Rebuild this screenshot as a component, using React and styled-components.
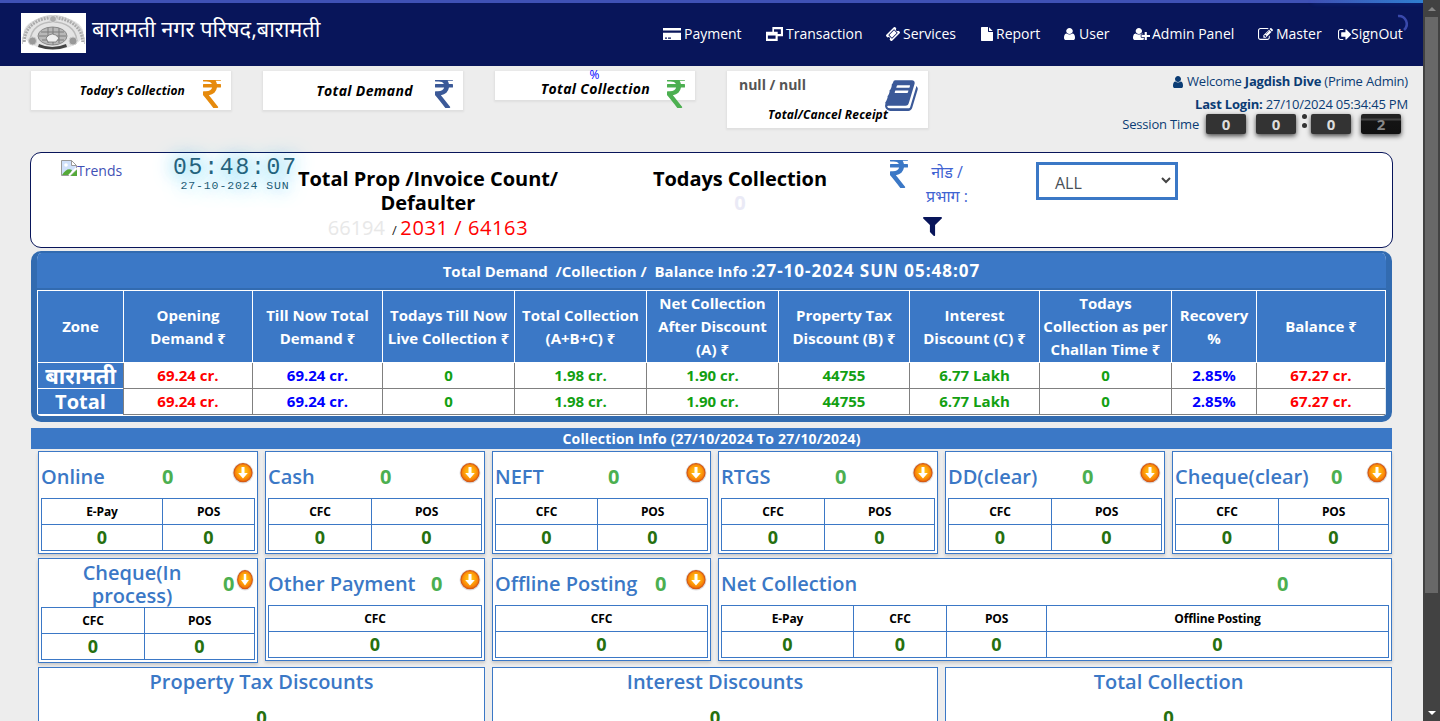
import React from "react";
import styled, { createGlobalStyle, css } from "styled-components";

const BLUE = "#3b78c6";
const NAVY = "#08155a";

const GlobalStyle = createGlobalStyle`
  * { box-sizing: border-box; }
  html, body { margin: 0; height: 721px; overflow: hidden; background: #ededed; }
  body { font-family: "Open Sans", "Noto Sans", "Noto Sans Devanagari", sans-serif; font-size: 14px; color: #000; }
`;

const Window = styled.div`
  display: flex;
  width: 1440px;
  height: 721px;
  overflow: hidden;
`;
const Page = styled.main`
  width: 1423px;
  height: 721px;
  overflow: hidden;
  background: #ededed;
`;

/* ---------- icons ---------- */
const PATHS = {
  rupee: "M1345 470v102q0 14-9 23t-23 9h-168q-23 144-129 234t-276 110q167 178 459 536 14 16 4 34-8 18-29 18h-195q-16 0-25-12-306-367-498-571-9-9-9-22v-127q0-13 9.5-22.5t22.5-9.5h112q132 0 212.5-43t102.5-125h-427q-14 0-23-9t-9-23v-102q0-14 9-23t23-9h413q-57-113-268-113h-145q-13 0-22.5-9.5t-9.5-22.5v-133q0-14 9-23t23-9h832q14 0 23 9t9 23v102q0 14-9 23t-23 9h-233q47 61 64 144h171q14 0 23 9t9 23z",
  user: "M1536 1399q0 109-62.5 187t-150.5 78h-854q-88 0-150.5-78t-62.5-187q0-85 8.5-160.5t31.5-152 58.5-131 94-89 134.5-34.5q131 128 313 128t313-128q76 0 134.5 34.5t94 89 58.5 131 31.5 152 8.5 160.5zm-256-887q0 159-112.5 271.5t-271.5 112.5-271.5-112.5-112.5-271.5 112.5-271.5 271.5-112.5 271.5 112.5 112.5 271.5z",
  filter: "M1595 295q17 41-14 70l-493 493v742q0 42-39 59-13 5-25 5-27 0-45-19l-256-256q-19-19-19-45v-486l-493-493q-31-29-14-70 17-39 59-39h1280q42 0 59 39z",
  book: "M1703 478q40 57 18 129l-275 906q-19 64-76.5 107.5t-122.5 43.5h-923q-77 0-148.5-53.5t-99.5-131.5q-24-67-2-127 0-4 3-27t4-37q1-8-3-21.5t-3-19.5q2-11 8-21t16.5-23.5 16.5-23.5q23-38 45-91.5t30-91.5q3-10 .5-30t-.5-28q3-11 17-28t17-23q21-36 42-92t25-90q1-9-2.5-32t.5-28q4-13 22-30.5t22-22.5q19-26 42.5-84.5t27.5-96.5q1-8-3-25.5t-2-26.5q2-8 9-18t18-23 17-21q8-12 16.5-30.5t15-35 16-36 19.5-32 26.5-23.5 36-11.5 47.5 5.5l-1 3q38-9 51-9h761q74 0 114 56t18 130l-274 906q-36 119-71.5 153.5t-128.5 34.5h-869q-27 0-38 15-11 16-1 43 24 70 144 70h923q29 0 56-15.5t35-41.5l300-987q7-22 5-57 38 15 59 43zm-1064 2q-4 13 2 22.5t20 9.5h608q13 0 25.5-9.5t16.5-22.5l21-64q4-13-2-22.5t-20-9.5h-608q-13 0-25.5 9.5t-16.5 22.5zm-83 256q-4 13 2 22.5t20 9.5h608q13 0 25.5-9.5t16.5-22.5l21-64q4-13-2-22.5t-20-9.5h-608q-13 0-25.5 9.5t-16.5 22.5z",
  userPlus: "M704 896q-159 0-271.5-112.5t-112.5-271.5 112.5-271.5 271.5-112.5 271.5 112.5 112.5 271.5-112.5 271.5-271.5 112.5zm960 128h352q13 0 22.5 9.5t9.5 22.5v192q0 13-9.5 22.5t-22.5 9.5h-352v352q0 13-9.5 22.5t-22.5 9.5h-192q-13 0-22.5-9.5t-9.5-22.5v-352h-352q-13 0-22.5-9.5t-9.5-22.5v-192q0-13 9.5-22.5t22.5-9.5h352v-352q0-13 9.5-22.5t22.5-9.5h192q13 0 22.5 9.5t9.5 22.5v352zm-736 224q0 52 38 90t90 38h256v238q-68 50-171 50h-874q-121 0-194-69t-73-190q0-53 3.5-103.5t14-109 26.5-108.5 43-97.5 62-81 85.5-53.5 111.5-20q19 0 39 17 79 61 154.5 91.5t164.5 30.5 164.5-30.5 154.5-91.5q20-17 39-17 132 0 217 96h-223q-52 0-90 38t-38 90v192z",
  edit: "M888 1184l116-116-152-152-116 116v56h96v96h56zm440-720q-16-16-33 1l-350 350q-17 17-1 33t33-1l350-350q17-17 1-33zm80 594v190q0 119-84.5 203.5t-203.5 84.5h-832q-119 0-203.5-84.5t-84.5-203.5v-832q0-119 84.5-203.5t203.5-84.5h832q63 0 117 25 15 7 18 23 3 17-9 29l-49 49q-14 14-32 8-23-6-45-6h-832q-66 0-113 47t-47 113v832q0 66 47 113t113 47h832q66 0 113-47t47-113v-126q0-13 9-22l64-64q15-15 35-7t20 29zm-96-738l288 288-672 672h-288v-288zm444 132l-92 92-288-288 92-92q28-28 68-28t68 28l152 152q28 28 28 68t-28 68z",
  signOut: "M704 1440q0 4 1 20t.5 26.5-3 23.5-10 19.5-20.5 6.5h-320q-119 0-203.5-84.5t-84.5-203.5v-704q0-119 84.5-203.5t203.5-84.5h320q13 0 22.5 9.5t9.5 22.5q0 4 1 20t.5 26.5-3 23.5-10 19.5-20.5 6.5h-320q-66 0-113 47t-47 113v704q0 66 47 113t113 47h312l11.5 1 11.5 3 8 5.5 7 9 2 13.5zm928-544q0 26-19 45l-544 544q-19 19-45 19t-45-19-19-45v-288h-448q-26 0-45-19t-19-45v-384q0-26 19-45t45-19h448v-288q0-26 19-45t45-19 45 19l544 544q19 19 19 45z",
  file: "M1152 512v-472q22 14 36 28l408 408q14 14 28 36h-472zm-128 32q0 40 28 68t68 28h544v1056q0 40-28 68t-68 28h-1344q-40 0-68-28t-28-68v-1600q0-40 28-68t68-28h800v544z",
  ticket: "M1024 452l316 316-572 572-316-316zm-211 979l618-618q19-19 19-45t-19-45l-362-362q-18-18-45-18t-45 18l-618 618q-19 19-19 45t19 45l362 362q18 18 45 18t45-18zm889-637l-907 908q-37 37-90.5 37t-90.5-37l-126-125q56-56 56-136t-56-136-136-56-136 56l-125-126q-37-37-37-90.5t37-90.5l907-906q37-37 90.5-37t90.5 37l125 125q-56 56-56 136t56 136 136 56 136-56l126 125q37 37 37 90.5t-37 90.5z",
  card: "M0 256h2304v256h-2304zM0 768h2304v768h-2304zM256 1280v128h256v-128zM640 1280v128h384v-128z",
  clone: "M768 128h1280v1024h-640v512h-1408v-1024h768zM960 384v256h448v256h384v-512zM224 1056v352h928v-352z",
};

const Glyph = styled.svg`
  display: block;
  flex: none;
  fill: currentColor;
  width: ${(p) => p.$w}px;
  height: ${(p) => p.$h}px;
`;
const Icon = ({ name, box, w, h }) => (
  <Glyph viewBox={box} $w={w} $h={h} preserveAspectRatio="none" aria-hidden="true">
    <path d={PATHS[name]} fillRule="evenodd" />
  </Glyph>
);
const Rupee = ({ w = 18, h = 28 }) => <Icon name="rupee" box="448 256 898 1280" w={w} h={h} />;

/* ---------- header ---------- */
const Header = styled.header`
  position: relative;
  display: flex;
  justify-content: space-between;
  height: 66px;
  padding: 10px 20px 0 21px;
  border-top: 3px solid #3f51b5;
  background: ${NAVY};
  color: #fff;
`;
const Glow = styled.div`
  position: absolute;
  top: -3px;
  right: 0;
  width: 110px;
  height: 3px;
  background: linear-gradient(90deg, #3f51b500, #2f7fd0);
  box-shadow: 0 0 5px #2962ff40;
`;
const Spinner = styled.svg`
  position: absolute;
  top: 10px;
  left: 1388px;
  width: 22px;
  height: 22px;
`;
const Brand = styled.div`
  display: flex;
  gap: 6px;
`;
const BrandName = styled.h1`
  margin: 0;
  font-size: 21.750px;
  line-height: 32px;
  font-weight: 400;
  white-space: nowrap;
`;
const Nav = styled.nav`
  display: grid;
  grid-template-columns: 103px 120px 95px 83px 69px 125px 80px 65px;
  height: 20px;
  margin-top: 11px;
`;
const NavItem = styled.a`
  display: flex;
  align-items: center;
  font-size: 14px;
  line-height: 20px;
  white-space: nowrap;
`;
const NavIcon = styled.span`
  width: ${(p) => p.$slot}px;
  flex: none;
`;

const NAV = [
  ["Payment", "card", "0 256 2304 1280", 18, 12, 21],
  ["Transaction", "clone", "0 128 2048 1536", 17, 14, 20],
  ["Services", "ticket", "50 50 1692 1692", 14, 14, 17],
  ["Report", "file", "128 0 1536 1792", 12, 14, 15],
  ["User", "user", "256 128 1280 1536", 11, 12, 15],
  ["Admin Panel", "userPlus", "0 128 2048 1536", 17, 12, 19],
  ["Master", "edit", "0 128 1792 1536", 15, 13, 18],
  ["SignOut", "signOut", "64 256 1568 1280", 13, 11, 13],
];

const Emblem = () => (
  <svg width="65" height="40" viewBox="0 0 65 40" aria-hidden="true">
    <rect width="65" height="40" fill="#fff" />
    <ellipse cx="32.500" cy="20" rx="30" ry="16.500" fill="#e4e4e4" />
    <path d="M3 29C3 14 16 4.500 32 4.500S62 14 62 29" fill="none" stroke="#aaa" strokeWidth="3.500" strokeDasharray="2 1" />
    <path d="M1.500 31C1 14 16 2.500 32 2.500S64 14 63.500 31" fill="none" stroke="#ccc" strokeWidth="1" />
    <path d="M9 28C10 15 20 9 32 9s23 6 24 19" fill="none" stroke="#bbb" strokeWidth="1.500" />
    <ellipse cx="31.500" cy="23" rx="14.500" ry="9" fill="#b8b8b8" stroke="#888" />
    <path d="M18 23h27M20 19h23M21 27h22M27 15v15M32 14v18M38 15v15" stroke="#7c7c7c" strokeWidth="1" />
    <path d="M25 25q6-8 13 0l-3 4h-8z" fill="#eee" stroke="#666" strokeWidth=".7" />
    <circle cx="11.500" cy="28" r="4" fill="#999" stroke="#ccc" />
    <circle cx="52" cy="28" r="4" fill="#999" stroke="#ccc" />
    <circle cx="32" cy="6" r="3.500" fill="#aaa" stroke="#ddd" />
    <path d="M18 31q13 6 27 0l1 3q-14 5-29 0z" fill="#444" />
  </svg>
);

/* ---------- summary strip ---------- */
const Strip = styled.section`
  display: flex;
  height: 86px;
  padding: 5px 15px 0 31px;
  gap: 32px;
`;
const StatCard = styled.div`
  display: flex;
  justify-content: flex-end;
  align-self: flex-start;
  width: ${(p) => p.$w || 200}px;
  height: ${(p) => p.$h}px;
  padding: 9px 10px 0 0;
  gap: ${(p) => p.$gap || 0}px;
  background: #fff;
  box-shadow: 0 1px 2px 1px rgba(0, 0, 0, 0.06);
  color: ${(p) => p.$color};
`;
const StatText = styled.div`
  display: flex;
  flex-direction: column;
  align-items: center;
  margin-top: ${(p) => p.$top}px;
  white-space: nowrap;
`;
const StatLabel = styled.div`
  color: #000;
  font-style: italic;
  font-weight: 700;
  font-size: ${(p) => p.$size}px;
  line-height: 18px;
  letter-spacing: ${(p) => (p.$size > 13 ? 0.35 : 0.15)}px;
`;
const Percent = styled.div`
  color: #0000ff;
  font-size: 12px;
  line-height: 10px;
  margin-left: -2px;
`;
const ReceiptCount = styled.div`
  align-self: flex-start;
  margin: 0 0 12px -29px;
  color: #555;
  font-weight: 700;
  font-size: 14px;
  line-height: 18px;
`;
const Overlap = styled.span`
  margin-left: -3px;
`;
const Account = styled.div`
  display: flex;
  flex-direction: column;
  align-items: flex-end;
  flex: 1;
  color: #0b3c74;
  font-size: 13px;
  letter-spacing: -0.2px;
  white-space: nowrap;
`;
const AccountLine = styled.div`
  display: flex;
  align-items: center;
  gap: 4px;
  height: 23px;
  line-height: 23px;
  margin-bottom: ${(p) => p.$mb || 0}px;
  margin-top: ${(p) => p.$mt || 0}px;
`;
const Session = styled.div`
  display: flex;
  align-items: flex-start;
  height: 26px;
  padding-right: 7px;
  line-height: 20px;
`;
const Flip = styled.span`
  width: 40px;
  height: 20px;
  margin-left: ${(p) => p.$ml}px;
  border-radius: 2px;
  background: ${(p) => (p.$dim ? "linear-gradient(#222 0 20%, #444 25% 30%, #141414 35%, #111)" : "#333")};
  box-shadow: 0 2px 5px rgba(0, 0, 0, 0.7);
  color: ${(p) => (p.$dim ? "#888" : "#ddd")};
  font-weight: 700;
  font-size: 15px;
  text-align: center;
`;
const Colon = styled.span`
  display: grid;
  gap: 4px;
  margin-left: 6px;
  &::before, &::after {
    content: "";
    width: 5px;
    height: 5px;
    border-radius: 50%;
    background: #333;
  }
`;

/* ---------- filter panel ---------- */
const Panel = styled.section`
  display: grid;
  grid-template-columns: 142px 124px 262px 320px 44px 48px 142px;
  width: 1363px;
  height: 96px;
  margin: 0 0 0 30px;
  border: 1px solid ${NAVY};
  border-radius: 11px;
  background: #fff;
`;
const Trends = styled.div`
  display: flex;
  padding: 7px 0 0 30px;
  color: #3f51b5;
  font-size: 14px;
  line-height: 21px;
`;
const Clock = styled.div`
  height: 38px;
  padding-top: 3px;
  font-family: "Liberation Mono", monospace;
  color: #1c5b74;
  text-align: center;
  white-space: nowrap;
  text-shadow: 0 0 20px #0aafe6, 0 0 20px rgba(10, 175, 230, 0.2);
`;
const Time = styled.div`
  font-size: 23px;
  line-height: 24px;
  letter-spacing: 1.8px;
  color: #26627c;
`;
const DateLine = styled.div`
  font-size: 11.500px;
  line-height: 11px;
  letter-spacing: 0.9px;
`;
const Metric = styled.div`
  padding: 14px 0 0 ${(p) => p.$pl || 0}px;
  text-align: center;
  font-weight: 700;
  font-size: 20px;
  line-height: 24px;
  letter-spacing: -0.05px;
  white-space: nowrap;
`;
const Counts = styled.div`
  height: 25px;
  line-height: 25px;
  font-weight: 400;
  color: #ff0000;
  letter-spacing: 0.6px;
`;
const Faint = styled.span`
  color: ${(p) => p.$c};
  letter-spacing: 0;
`;
const Slash = styled.span`
  margin: 0 3px 0 7px;
  font-size: 13px;
  color: #222;
`;
const Cell = styled.div`
  padding-top: ${(p) => p.$pt}px;
  padding-left: ${(p) => p.$pl || 0}px;
  color: ${BLUE};
`;
const Node = styled.div`
  padding-top: 7px;
  text-align: center;
  font-size: 16px;
  line-height: 24px;
  color: #3f63d2;
  white-space: nowrap;
`;
const FilterIcon = styled.div`
  margin-top: 9px;
  color: ${NAVY};
`;
const SelectBox = styled.div`
  display: flex;
  align-items: center;
  justify-content: space-between;
  width: 142px;
  height: 38px;
  margin: 9px 0 0 65px;
  padding: 3px 4px 0 16px;
  border: 3px solid ${BLUE};
  color: #495057;
  font-size: 16px;
`;
const Chevron = styled.svg`
  margin-bottom: 4px;
`;

/* ---------- demand table ---------- */
const Demand = styled.section`
  width: 1361px;
  height: 171px;
  margin: 3px 0 0 31px;
  border: solid #326bb0;
  border-width: 2px 6px 6px;
  border-radius: 10px;
  background: #fff;
  overflow: hidden;
`;
const DemandTitle = styled.h2`
  display: flex;
  justify-content: center;
  align-items: center;
  height: 37px;
  margin: 0;
  border-bottom: 2px solid #326bb0;
  background: ${BLUE};
  color: #fff;
  font-size: 15px;
  font-weight: 700;
  white-space: pre;
`;
const Stamp = styled.span`
  font-size: 17px;
  letter-spacing: 1px;
`;
const TableGrid = styled.div`
  display: grid;
  grid-template-columns: 85px 128px 129px 131px 131px 131px 130px 129px 131px 84px 128px;
  column-gap: 1px;
  padding: ${(p) => (p.$head ? "1px" : "0 1px 1px")};
  background: ${(p) => (p.$head ? "#fff" : "linear-gradient(90deg, #fff 86px, #808080 86px 1348px, #dfe8f3 1348px)")};
`;
const HeadCell = styled.div`
  display: flex;
  align-items: center;
  justify-content: center;
  height: 71px;
  background: ${BLUE};
  color: #fff;
  text-align: center;
  font-size: 15px;
  font-weight: 700;
  line-height: 23px;
  white-space: pre;
`;
const BodyCell = styled.div`
  height: 25px;
  background: ${(p) => (p.$zone ? BLUE : "#fff")};
  color: ${(p) => p.$c};
  text-align: center;
  font-size: ${(p) => p.$zone || 15}px;
  font-weight: 700;
  line-height: 25px;
  white-space: nowrap;
`;
const HEADS = ["Zone", "Opening\nDemand ₹", "Till Now Total\nDemand ₹", "Todays Till Now\nLive Collection ₹", "Total Collection\n(A+B+C) ₹", "Net Collection\nAfter Discount\n(A) ₹", "Property Tax\nDiscount (B) ₹", "Interest\nDiscount (C) ₹", "Todays\nCollection as per\nChallan Time ₹", "Recovery\n%", "Balance ₹"];
const ZONES = [["बारामती", 22], ["Total", 20]];
const R = "#ff0000", B = "#0000ff", G = "#12a012";
const VALUES = [["69.24 cr.", R], ["69.24 cr.", B], ["0", G], ["1.98 cr.", G], ["1.90 cr.", G], ["44755", G], ["6.77 Lakh", G], ["0", G], ["2.85%", B], ["67.27 cr.", R]];

/* ---------- collection cards ---------- */
const InfoBar = styled.h2`
  width: 1361px;
  height: 21px;
  margin: 6px 0 2px 31px;
  background: ${BLUE};
  color: #fff;
  text-align: center;
  font-size: 14px;
  line-height: 21px;
  font-weight: 700;
  letter-spacing: 0.2px;
`;
const CardGrid = styled.section`
  display: grid;
  grid-template-columns: 220px 220px 219px 220px 220px 220px;
  column-gap: 7px;
  row-gap: 4px;
  align-items: start;
  margin-left: 38px;
  width: 1354px;
`;
const Card = styled.article`
  grid-column: span ${(p) => p.$span || 1};
  height: ${(p) => p.$h || 103}px;
  padding: 2px;
  border: 1px solid ${BLUE};
  background: #fff;
  box-shadow: 0 2px 3px rgba(0, 0, 0, 0.16);
`;
const CardHead = styled.div`
  display: flex;
  height: ${(p) => (p.$tall ? 46 : 44)}px;
  color: ${BLUE};
  font-size: 20px;
  line-height: 23px;
  font-weight: 600;
  white-space: pre;
`;
const CardName = styled.div`
  width: ${(p) => p.$w}px;
  flex: none;
  padding-top: ${(p) => (p.$tall ? 0 : 11)}px;
  text-align: ${(p) => (p.$tall ? "center" : "left")};
`;
const Amount = styled.div`
  flex: 1;
  padding-top: 11px;
  color: #4caf50;
  font-weight: 700;
`;
const Arrow = styled.div`
  flex: none;
  padding: 8px 1px 0 0;
`;
const Mini = styled.div`
  display: grid;
  grid-template-columns: ${(p) => p.$cols};
  gap: 1px;
  padding: 1px;
  background: ${BLUE};
`;
const MiniCell = styled.div`
  height: 25px;
  background: #fff;
  text-align: center;
  line-height: 25px;
  font-weight: 700;
  ${(p) =>
    p.$value
      ? css`
          color: #26700f;
          font-size: 18px;
        `
      : css`
          color: #000;
          font-size: 12px;
          letter-spacing: -0.15px;
        `}
`;
const Discount = styled.article`
  grid-column: span 2;
  height: 90px;
  border: 1px solid ${BLUE};
  background: #fff;
  color: ${BLUE};
  font-size: 20px;
  font-weight: 600;
  line-height: 28px;
  text-align: center;
`;
const DiscountValue = styled.div`
  margin-top: 8px;
  color: #26700f;
  font-size: 18.500px;
  line-height: 26px;
  font-weight: 700;
`;

const DownButton = ({ w = 22 }) => (
  <svg width={w} height="22" viewBox="0 0 22 22" preserveAspectRatio="none" aria-hidden="true">
    <defs>
      <radialGradient id="orb" cx=".5" cy=".45" r=".55">
        <stop offset="0" stopColor="#ffd21c" />
        <stop offset=".55" stopColor="#ffa20a" />
        <stop offset="1" stopColor="#ef6a08" />
      </radialGradient>
    </defs>
    <circle cx="11" cy="11" r="10.500" fill="#dcdee2" />
    <circle cx="11" cy="10.700" r="9" fill="url(#orb)" stroke="#d65a12" strokeWidth="1.200" />
    <path d="M9.500 5h3v6h3.300L11 16.500 6.200 11h3.300z" fill="#fff" />
  </svg>
);

const CARDS = [
  { name: "Online", w: 121, cols: "120px 1fr", heads: ["E-Pay", "POS"] },
  { name: "Cash", w: 112, cols: "102px 1fr", heads: ["CFC", "POS"] },
  { name: "NEFT", w: 113, cols: "101px 1fr", heads: ["CFC", "POS"] },
  { name: "RTGS", w: 114, cols: "102px 1fr", heads: ["CFC", "POS"] },
  { name: "DD(clear)", w: 134, cols: "102px 1fr", heads: ["CFC", "POS"] },
  { name: "Cheque(clear)", w: 156, cols: "102px 1fr", heads: ["CFC", "POS"] },
  { name: "Cheque(In\nprocess)", w: 182, cols: "102px 1fr", heads: ["CFC", "POS"], tall: true },
  { name: "Other Payment", w: 163, cols: "1fr", heads: ["CFC"] },
  { name: "Offline Posting", w: 160, cols: "1fr", heads: ["CFC"] },
  { name: "Net Collection", w: 556, cols: "131px 92px 99px 1fr", heads: ["E-Pay", "CFC", "POS", "Offline Posting"], span: 3 },
];

/* ---------- scrollbar ---------- */
const Scrollbar = styled.aside`
  display: flex;
  flex-direction: column;
  align-items: center;
  justify-content: space-between;
  width: 17px;
  height: 721px;
  padding: 7px 0 6px;
  background: #424242;
`;
const Thumb = styled.div`
  width: 13px;
  height: 576px;
  margin: 6px 0 auto;
  background: #686868;
`;
const Tip = styled.span`
  border: solid transparent;
  border-width: 0 4px;
  ${(p) => (p.$up ? "border-bottom: 4px solid #868686;" : "border-top: 4px solid #fff;")}
`;

export default function App() {
  return (
    <Window>
      <GlobalStyle />
      <Page>
        <Header>
          <Glow />
          <Brand>
            <Emblem />
            <BrandName>बारामती नगर परिषद,बारामती</BrandName>
          </Brand>
          <Nav>
            {NAV.map(([label, name, box, w, h, slot]) => (
              <NavItem key={label}>
                <NavIcon $slot={slot}><Icon name={name} box={box} w={w} h={h} /></NavIcon>
                {label}
              </NavItem>
            ))}
          </Nav>
          <Spinner viewBox="0 0 22 22">
            <path d="M10 3a8 8 0 0 1 6 14" fill="none" stroke="#3949ab" strokeWidth="2.500" />
          </Spinner>
        </Header>

        <Strip>
          <StatCard $h={39} $gap={18} $color="#e68a0c">
            <StatText $top={2}><StatLabel $size={12}>Today's Collection</StatLabel></StatText>
            <Rupee />
          </StatCard>
          <StatCard $h={39} $gap={22} $color="#3b5998">
            <StatText $top={2}><StatLabel $size={14}>Total Demand</StatLabel></StatText>
            <Rupee />
          </StatCard>
          <StatCard $h={29} $gap={17} $color="#4caf50">
            <StatText $top={-10}>
              <Percent>%</Percent>
              <StatLabel $size={14}>Total Collection</StatLabel>
            </StatText>
            <Rupee />
          </StatCard>
          <StatCard $w={201} $h={57} $color="#3b5998">
            <StatText $top={-4}>
              <ReceiptCount>null / null</ReceiptCount>
              <StatLabel $size={12}>Total/Cancel Receipt</StatLabel>
            </StatText>
            <Overlap><Icon name="book" box="60 120 1680 1550" w={33} h={31} /></Overlap>
          </StatCard>
          <Account>
            <AccountLine $mt={-1}>
              <Icon name="user" box="256 128 1280 1536" w={10} h={12} />
              <span>Welcome <b>Jagdish Dive</b> (Prime Admin)</span>
            </AccountLine>
            <AccountLine $mb={-2}><span><b>Last Login:</b> 27/10/2024 05:34:45 PM</span></AccountLine>
            <Session>
              Session Time
              <Flip $ml={7}>0</Flip>
              <Flip $ml={10}>0</Flip>
              <Colon />
              <Flip $ml={4}>0</Flip>
              <Flip $ml={10} $dim>2</Flip>
            </Session>
          </Account>
        </Strip>

        <Panel>
          <Trends>
            <svg width="16" height="16" viewBox="0 0 16 16" aria-hidden="true">
              <path d="M.5.5h10l5 5v4l-6 6h-9z" fill="#cfe0fb" stroke="#9a9a9a" />
              <path d="M10.500.5v5h5z" fill="#fff" stroke="#9a9a9a" />
              <circle cx="5" cy="5" r="1.800" fill="#fff" />
              <path d="M1 15q5-8 10-5l-2 5z" fill="#54a938" />
              <path d="M16 9.500v6.500H9.500z" fill="#54a938" />
              <path d="M15.500 8L8 15.500" stroke="#fff" strokeWidth="2" />
            </svg>
            Trends
          </Trends>
          <Clock>
            <Time>05:48:07</Time>
            <DateLine>27-10-2024 SUN</DateLine>
          </Clock>
          <Metric>
            Total Prop /Invoice Count/<br />Defaulter
            <Counts><Faint $c="#e8e8e8">66194</Faint><Slash>/</Slash>2031 / 64163</Counts>
          </Metric>
          <Metric $pl={42}>
            Todays Collection<br /><Faint $c="#eaeaf6">0</Faint>
          </Metric>
          <Cell $pt={7} $pl={11}><Rupee /></Cell>
          <Node>
            नोड /<br />प्रभाग :
            <FilterIcon><Icon name="filter" box="190 256 1412 1408" w={19} h={19} /></FilterIcon>
          </Node>
          <SelectBox>
            ALL
            <Chevron width="10" height="7" viewBox="0 0 10 7"><path d="M1 1l4 4 4-4" fill="none" stroke="#444" strokeWidth="2" /></Chevron>
          </SelectBox>
        </Panel>

        <Demand>
          <DemandTitle>{"Total Demand  /Collection /  Balance Info :"}<Stamp>27-10-2024 SUN 05:48:07</Stamp></DemandTitle>
          <TableGrid $head>
            {HEADS.map((h) => <HeadCell key={h}>{h}</HeadCell>)}
          </TableGrid>
          {ZONES.map(([zone, size]) => (
            <TableGrid key={zone}>
              <BodyCell $zone={size} $c="#fff">{zone}</BodyCell>
              {VALUES.map(([v, c], i) => <BodyCell key={i} $c={c}>{v}</BodyCell>)}
            </TableGrid>
          ))}
        </Demand>

        <InfoBar>Collection Info (27/10/2024 To 27/10/2024)</InfoBar>

        <CardGrid>
          {CARDS.map(({ name, w, cols, heads, tall, span }) => (
            <Card key={name} $span={span} $h={tall ? 105 : 103}>
              <CardHead $tall={tall}>
                <CardName $w={w} $tall={tall}>{name}</CardName>
                <Amount>0</Amount>
                {!span && <Arrow><DownButton w={tall ? 18 : 22} /></Arrow>}
              </CardHead>
              <Mini $cols={cols}>
                {heads.map((h) => <MiniCell key={h}>{h}</MiniCell>)}
                {heads.map((h) => <MiniCell key={h} $value>0</MiniCell>)}
              </Mini>
            </Card>
          ))}
          {["Property Tax Discounts", "Interest Discounts", "Total Collection"].map((t) => (
            <Discount key={t}>{t}<DiscountValue>0</DiscountValue></Discount>
          ))}
        </CardGrid>
      </Page>
      <Scrollbar>
        <Tip $up />
        <Thumb />
        <Tip />
      </Scrollbar>
    </Window>
  );
}
